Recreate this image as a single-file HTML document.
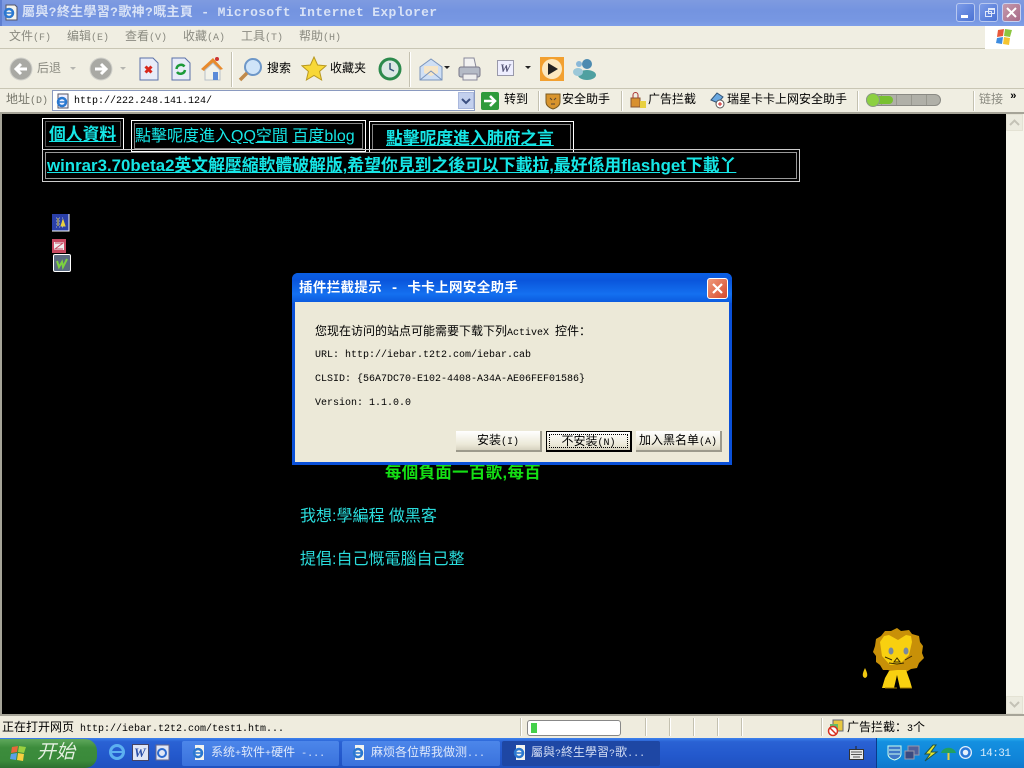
<!DOCTYPE html>
<html><head><meta charset="utf-8">
<style>
html,body{margin:0;padding:0;background:#000}
#r{position:relative;width:1024px;height:768px;overflow:hidden;background:#000;font-family:"Liberation Mono","WenQuanYi Zen Hei","Noto Sans CJK SC",monospace;font-size:12px;color:#000}
#r div,#r svg{position:absolute}
.t{white-space:nowrap;line-height:14px}
.m{color:#8a8a80;top:30px;font-size:12px;white-space:nowrap;line-height:14px}
.m i{font-style:normal;font-size:10px}
s{font-size:10px;text-decoration:none}
.b{border:1px solid #fff;box-sizing:border-box}
.c{color:#16e6e6;white-space:nowrap;font-family:"Liberation Sans","WenQuanYi Zen Hei","Noto Sans CJK SC",sans-serif}
u{text-decoration:underline}
.sep{width:1px;background:#c4c1b0;border-right:1px solid #fff}
.btn{background:linear-gradient(#fff,#ece9d8 70%,#d6d2c0);border-right:2px solid #9c9a8c;border-bottom:2px solid #9c9a8c;box-sizing:border-box;text-align:center;line-height:20px;font-size:12px;white-space:nowrap}
.task{height:25px;top:741px;border-radius:2px;background:linear-gradient(#4c86ea,#3a72dc);color:#dfe8fa;line-height:24px;font-size:12px;white-space:nowrap;box-sizing:border-box;padding-left:29px}
</style></head><body><div id="r">

<!-- title bar -->
<div style="left:0;top:0;width:1024px;height:26px;background:linear-gradient(#7f9be0 0,#7494e0 40%,#7797e2 80%,#7f9fe8 100%)"></div>
<div style="left:0;top:0;width:2px;height:26px;background:#5f7fd0"></div>
<svg style="left:2px;top:4px" width="17" height="17" viewBox="0 0 17 17"><path d="M4 1h9l2 2v13H4z" fill="#f4f4ee" stroke="#556"/><circle cx="7" cy="9" r="4" fill="none" stroke="#2a78d0" stroke-width="2.500"/><path d="M3 9h8" stroke="#2a78d0" stroke-width="1.500"/></svg>
<div class="t" style="left:22px;top:5px;color:#d8e2f6;font-weight:bold;font-size:13px;line-height:15px;letter-spacing:.34px">屬與?終生學習?歌神?嘅主頁 - Microsoft Internet Explorer</div>
<div style="left:956px;top:3px;width:19px;height:19px;background:linear-gradient(135deg,#7d9ce8,#4a72d4);border:1px solid #b8c8f0;border-radius:3px;box-sizing:border-box"></div>
<div style="left:961px;top:15px;width:7px;height:3px;background:#fff"></div>
<div style="left:979px;top:3px;width:19px;height:19px;background:linear-gradient(135deg,#7d9ce8,#4a72d4);border:1px solid #b8c8f0;border-radius:3px;box-sizing:border-box"></div>
<div style="left:985px;top:11px;width:7px;height:6px;border:1px solid #dfe7fa;box-sizing:border-box"></div>
<div style="left:988px;top:8px;width:7px;height:6px;border:1px solid #dfe7fa;border-top-width:2px;box-sizing:border-box"></div>
<div style="left:1002px;top:3px;width:19px;height:19px;background:linear-gradient(135deg,#c49aac,#a86a88);border:1px solid #c8d0f0;border-radius:3px;box-sizing:border-box"></div>
<svg style="left:1002px;top:3px" width="19" height="19"><path d="M5 5l9 9M14 5l-9 9" stroke="#fff" stroke-width="2"/></svg>

<!-- menu -->
<div style="left:0;top:26px;width:1024px;height:23px;background:#f0eee2;border-bottom:1px solid #c9c6b4;box-sizing:border-box"></div>
<div class="m" style="left:9px">文件<i>(F)</i></div>
<div class="m" style="left:67px">编辑<i>(E)</i></div>
<div class="m" style="left:125px">查看<i>(V)</i></div>
<div class="m" style="left:183px">收藏<i>(A)</i></div>
<div class="m" style="left:241px">工具<i>(T)</i></div>
<div class="m" style="left:299px">帮助<i>(H)</i></div>
<div style="left:985px;top:26px;width:39px;height:23px;background:#fff"></div>
<svg style="left:995px;top:27px" width="20" height="20" viewBox="0 0 20 20"><path d="M3 3l6-1-1 7-6 1z" fill="#e8583a"/><path d="M10 2l7 1-2 7-6-1z" fill="#8cc63f"/><path d="M2 11l6-1-1 7-6-1z" fill="#3d8ce0"/><path d="M9 10l6 1-1 7-6-1z" fill="#f4c430"/></svg>

<!-- toolbar -->
<div style="left:0;top:49px;width:1024px;height:40px;background:#f0eee2;border-bottom:1px solid #c9c6b4;box-sizing:border-box"></div>
<svg style="left:9px;top:57px" width="24" height="24"><circle cx="12" cy="12" r="11" fill="#a9a9a4" stroke="#d0d0ca"/><path d="M18 12H8M12 7l-5 5 5 5" stroke="#fff" stroke-width="3" fill="none"/></svg>
<div class="t" style="left:37px;top:62px;color:#8a8a80">后退</div>
<svg style="left:70px;top:66px" width="7" height="5"><path d="M0 1h6L3 4z" fill="#b5b5b0"/></svg>
<svg style="left:89px;top:57px" width="24" height="24"><circle cx="12" cy="12" r="11" fill="#a9a9a4" stroke="#d0d0ca"/><path d="M6 12h10M12 7l5 5-5 5" stroke="#fff" stroke-width="3" fill="none"/></svg>
<svg style="left:120px;top:66px" width="7" height="5"><path d="M0 1h6L3 4z" fill="#b5b5b0"/></svg>
<svg style="left:139px;top:57px" width="20" height="24"><path d="M1 1h13l5 5v17H1z" fill="#e8ecf8" stroke="#5a70a8"/><path d="M6.500 9.500l6 6M12.500 9.500l-6 6" stroke="#d8281c" stroke-width="3"/></svg>
<svg style="left:171px;top:57px" width="20" height="24"><path d="M1 1h13l5 5v17H1z" fill="#e8ecf8" stroke="#5a70a8"/><path d="M5.500 12a4.500 4.500 0 0 1 8-2.500M14 13a4.500 4.500 0 0 1-8 2" stroke="#1c9a3a" stroke-width="2.500" fill="none"/></svg>
<svg style="left:200px;top:56px" width="24" height="25"><path d="M1 13L13 2l10 11-3 1-7-6-9 7z" fill="#e88a2c"/><path d="M5 14l8-7 7 7v10H5z" fill="#f2f2ea" stroke="#b8c0c8"/><rect x="13" y="16" width="5" height="8" fill="#5a8ad8"/><circle cx="17" cy="3" r="2" fill="#c33"/></svg>
<div class="sep" style="left:231px;top:52px;height:35px"></div>
<svg style="left:238px;top:57px" width="26" height="25"><circle cx="15" cy="10" r="8" fill="#cfe4f8" stroke="#6d97c8" stroke-width="2"/><path d="M9 16L2 23" stroke="#c08a4a" stroke-width="3.500"/></svg>
<div class="t" style="left:267px;top:62px">搜索</div>
<svg style="left:301px;top:56px" width="26" height="26"><path d="M13 1l3.600 8 8.400.8-6.400 5.600 2 8.600-7.600-4.600L5.400 24l2-8.600L1 9.800 9.400 9z" fill="#f8d838" stroke="#b89820"/></svg>
<div class="t" style="left:330px;top:62px">收藏夹</div>
<svg style="left:378px;top:57px" width="24" height="24"><circle cx="12" cy="12" r="10" fill="#dce8e4" stroke="#2c8a4c" stroke-width="3"/><path d="M12 6v6l4 2" stroke="#357" stroke-width="1.500" fill="none"/></svg>
<div class="sep" style="left:409px;top:52px;height:35px"></div>
<svg style="left:419px;top:57px" width="24" height="24"><path d="M1 10L12 2l11 8v13H1z" fill="#cfdff4" stroke="#7a94bc"/><path d="M5 9h14v7l-7 3-7-3z" fill="#f6e6c8"/><path d="M1 23l11-9 11 9" fill="none" stroke="#7a94bc"/></svg>
<svg style="left:444px;top:66px" width="6" height="4"><path d="M0 0h6L3 3z" fill="#222"/></svg>
<svg style="left:457px;top:57px" width="25" height="25"><path d="M7 1h10l2 9H7z" fill="#f2f2f2" stroke="#889"/><rect x="2" y="10" width="21" height="10" rx="2" fill="#b4bac6" stroke="#778"/><rect x="6" y="17" width="14" height="6" fill="#eee" stroke="#889"/></svg>
<svg style="left:497px;top:60px" width="18" height="17"><rect x=".5" y=".5" width="16" height="15" fill="#eef" stroke="#99a"/><text x="3" y="12" font-family="Liberation Serif" font-style="italic" font-weight="bold" font-size="12" fill="#557">W</text></svg>
<svg style="left:525px;top:66px" width="6" height="4"><path d="M0 0h6L3 3z" fill="#222"/></svg>
<div style="left:540px;top:57px;width:24px;height:24px;background:#f2a030"></div>
<svg style="left:540px;top:57px" width="24" height="24"><circle cx="12" cy="12" r="10" fill="#fbe8c0"/><path d="M8 6l10 6-10 6z" fill="#222"/></svg>
<svg style="left:572px;top:58px" width="26" height="22"><circle cx="7" cy="6" r="3" fill="#8ab8d8"/><circle cx="15" cy="6" r="5" fill="#4c8ab0"/><ellipse cx="15" cy="17" rx="9" ry="5" fill="#4fa0a0"/><ellipse cx="6" cy="14" rx="5" ry="4" fill="#9cc8d8"/></svg>

<!-- address bar -->
<div style="left:0;top:89px;width:1024px;height:24px;background:#f0eee2"></div>
<div class="t" style="left:6px;top:93px;color:#77776c">地址<s>(D)</s></div>
<div style="left:52px;top:90px;width:423px;height:21px;background:#fff;border:1px solid #8a9ac0;box-sizing:border-box"></div>
<svg style="left:55px;top:93px" width="16" height="16"><path d="M3 1h10v14H3z" fill="#eef" stroke="#556"/><circle cx="7" cy="9" r="4" fill="none" stroke="#2a78d0" stroke-width="2.500"/><path d="M3 9h8" stroke="#2a78d0" stroke-width="1.500"/></svg>
<div class="t" style="left:74px;top:95px;font-size:10px;line-height:13px">http://222.248.141.124/</div>
<div style="left:458px;top:92px;width:16px;height:17px;background:#c3d0ee;border:1px solid #aab8dd;box-sizing:border-box"></div>
<svg style="left:458px;top:92px" width="16" height="17"><path d="M4 7l4 4 4-4" stroke="#3b4f80" stroke-width="2" fill="none"/></svg>
<div style="left:481px;top:92px;width:18px;height:18px;background:#2e9a3a;border-radius:2px"></div>
<svg style="left:481px;top:92px" width="18" height="18"><path d="M3 9h11M9 4l5 5-5 5" stroke="#fff" stroke-width="2.500" fill="none"/></svg>
<div class="t" style="left:504px;top:93px">转到</div>
<div class="sep" style="left:538px;top:91px;height:20px"></div>
<svg style="left:545px;top:92px" width="16" height="18"><path d="M1 2h14v8c0 4-4 6-7 7-3-1-7-3-7-7z" fill="#d8942c" stroke="#7a5a20"/><path d="M5 6l2 2M11 6l-2 2M6 12h4" stroke="#543"/></svg>
<div class="t" style="left:562px;top:93px">安全助手</div>
<div class="sep" style="left:621px;top:91px;height:20px"></div>
<svg style="left:630px;top:92px" width="17" height="17"><rect x="1" y="6" width="9" height="9" fill="#d89030" stroke="#853"/><path d="M3 6V3a2.500 2.500 0 0 1 5 0v3" stroke="#a33" fill="none"/><rect x="10" y="9" width="6" height="7" fill="#e8d040"/></svg>
<div class="t" style="left:648px;top:93px">广告拦截</div>
<svg style="left:709px;top:92px" width="17" height="17"><path d="M2 8L8 1l6 4-5 6z" fill="#6aa8e0" stroke="#357"/><circle cx="11" cy="12" r="4" fill="#fff" stroke="#555"/><path d="M9 12h4M11 10v4" stroke="#c22"/></svg>
<div class="t" style="left:727px;top:93px">瑞星卡卡上网安全助手</div>
<div class="sep" style="left:857px;top:91px;height:20px"></div>
<div style="left:866px;top:94px;width:75px;height:12px;border-radius:6px;background:repeating-linear-gradient(90deg,#b0b0a8 0,#b0b0a8 14px,#98988f 14px,#98988f 15px);border:1px solid #8a8a84;box-sizing:border-box"></div>
<div style="left:868px;top:96px;width:25px;height:8px;background:#78c030;border-radius:4px"></div>
<div style="left:866px;top:93px;width:14px;height:14px;border-radius:7px;background:#8cd040;border:1px solid #8a9a84;box-sizing:border-box"></div>
<div class="sep" style="left:973px;top:91px;height:20px"></div>
<div class="t" style="left:979px;top:93px;color:#8a8a80">链接</div>
<div class="t" style="left:1010px;top:90px;font-size:11px;font-weight:bold">»</div>

<!-- frame / scrollbar -->
<div style="left:0;top:112px;width:1024px;height:2px;background:#a6a498"></div>
<div style="left:0;top:112px;width:2px;height:604px;background:#a6a498"></div>
<div style="left:1006px;top:114px;width:18px;height:602px;background:#f5f4ea"></div>
<div style="left:1006px;top:114px;width:17px;height:17px;background:#ecebdf;border:1px solid #e4e2d4;box-sizing:border-box"></div>
<svg style="left:1006px;top:114px" width="17" height="17"><path d="M4 11l4.500-4.500L13 11" stroke="#c4c2b6" stroke-width="2" fill="none"/></svg>
<div style="left:1006px;top:696px;width:17px;height:18px;background:#ecebdf;border:1px solid #e4e2d4;box-sizing:border-box"></div>
<svg style="left:1006px;top:696px" width="17" height="18"><path d="M4 6l4.500 4.500L13 6" stroke="#c4c2b6" stroke-width="2" fill="none"/></svg>

<!-- page content -->
<div class="b" style="left:42px;top:118px;width:82px;height:32px"></div>
<div class="b" style="left:45px;top:121px;width:76px;height:26px;border-color:#555"></div>
<div class="c t" style="left:49px;top:126px;font-size:16.800px;line-height:18px;font-weight:bold"><u>個人資料</u></div>
<div class="b" style="left:131px;top:120px;width:235px;height:32px"></div>
<div class="b" style="left:134px;top:123px;width:229px;height:26px;border-color:#888"></div>
<div class="c t" style="left:135px;top:128px;font-size:16px;line-height:18px">點擊呢度進入<u>QQ空間</u> <u>百度blog</u></div>
<div class="b" style="left:369px;top:121px;width:205px;height:32px"></div>
<div class="b" style="left:372px;top:124px;width:199px;height:26px;border-color:#888"></div>
<div class="c t" style="left:386px;top:130px;font-size:16.800px;line-height:18px;font-weight:bold"><u>點擊呢度進入肺府之言</u></div>
<div class="b" style="left:42px;top:149px;width:758px;height:33px;border-color:#ccc"></div>
<div class="b" style="left:45px;top:152px;width:752px;height:27px;border-color:#999"></div>
<div class="c t" style="left:47px;top:157px;font-size:16.800px;line-height:18px;font-weight:bold;letter-spacing:.04px"><u>winrar3.70beta2英文解壓縮軟體破解版,希望你見到之後可以下載拉,最好係用flashget下載丫</u></div>

<svg style="left:52px;top:214px" width="18" height="18"><rect width="17" height="17" fill="#2a3fa8"/><path d="M17 0v17H0" fill="none" stroke="#fff"/><path d="M4 4h9M4 7h9M4 10h9M4 13h9" stroke="#9aa8e0" stroke-dasharray="1 2"/><path d="M6 4v8M11 6l-2 6h4z" stroke="#e8d040" fill="#e8d040"/></svg>
<svg style="left:52px;top:239px" width="14" height="14"><rect width="14" height="14" fill="#c84a62"/><rect x="2" y="3" width="10" height="8" fill="#eee"/><path d="M3 4h8L3 10h8" stroke="#c84a62" fill="none"/></svg>
<div style="left:53px;top:254px;width:18px;height:18px;background:#5a6a80;border:1px solid #fff;border-radius:2px;box-sizing:border-box"></div>
<svg style="left:53px;top:254px" width="18" height="18"><path d="M4 7l2 6 3-5 1 5 4-8" stroke="#7cd040" stroke-width="2" fill="none"/></svg>

<div class="c t" style="left:385px;top:465px;font-size:16.400px;line-height:17px;font-weight:bold;color:#14e014;letter-spacing:.4px">每個負面一百歌,每百</div>
<div class="c t" style="left:300px;top:507px;font-size:16px;line-height:19px;color:#2adcdc">我想:學編程 做黑客</div>
<div class="c t" style="left:300px;top:550px;font-size:16px;line-height:19px;color:#2adcdc">提倡:自己慨電腦自己整</div>

<!-- lion -->
<svg style="left:860px;top:625px" width="70" height="68" viewBox="860 625 70 68">
<path d="M897 628l4 3 8-1 3 4 7 2 1 6 3 4-1 7 2 5-5 5-2 5-6 1-5 3-7-1-5 2-6-3-5 0-3-5-4-3 0-6-3-4 2-6 1-7 5-3 4-5 6 0z" fill="#c89008"/>
<path d="M884 636l5-1 9 5 8-5 5 1 1 6-3 13-9 9-10 1-8-9-2-14z" fill="#f8d010"/>
<ellipse cx="891" cy="651" rx="2.500" ry="3.500" fill="#7888a0"/><ellipse cx="906" cy="651" rx="2.500" ry="3.500" fill="#7888a0"/>
<path d="M897 658l-3 4h6zM885 657l7 3M912 656l-7 4M889 663l8 1 7-1" stroke="#3a2a00" fill="none"/>
<path d="M889 671l8-1 9 0 4 11 2 7h-12l-3-13-3 13h-12l3-10z" fill="#f8d010"/>
<path d="M885 688h12M900 688h12" stroke="#a07800"/>
<path d="M865 678c-3-1-3-4 0-10 3 6 3 9 0 10z" fill="#f0c810"/>
</svg>

<!-- dialog -->
<div style="left:292px;top:273px;width:440px;height:192px;background:#0a50d8;border-radius:6px 6px 0 0;box-sizing:border-box"></div>
<div style="left:292px;top:273px;width:440px;height:30px;border-radius:6px 6px 0 0;background:linear-gradient(#0a5fe4,#0a56dc 25%,#1470f0 70%,#0a58dc)"></div>
<div class="t" style="left:299px;top:283px;color:#fff;font-weight:bold;font-size:13.500px;letter-spacing:.35px">插件拦截提示 - 卡卡上网安全助手</div>
<div style="left:707px;top:278px;width:21px;height:21px;background:linear-gradient(135deg,#ee9a7c,#d8492c);border:1px solid #fff;border-radius:3px;box-sizing:border-box"></div>
<svg style="left:707px;top:278px" width="21" height="21"><path d="M6 6l9 9M15 6l-9 9" stroke="#fff" stroke-width="2.200"/></svg>
<div style="left:295px;top:302px;width:434px;height:160px;background:#ece9d8"></div>
<div class="t" style="left:315px;top:325px;font-size:12px">您现在访问的站点可能需要下载下列<s>ActiveX </s>控件：</div>
<div class="t" style="left:315px;top:349px;font-size:10px">URL: http://iebar.t2t2.com/iebar.cab</div>
<div class="t" style="left:315px;top:373px;font-size:10px">CLSID: {56A7DC70-E102-4408-A34A-AE06FEF01586}</div>
<div class="t" style="left:315px;top:397px;font-size:10px">Version: 1.1.0.0</div>
<div class="btn" style="left:456px;top:431px;width:86px;height:21px">安装<s>(I)</s></div>
<div class="btn" style="left:546px;top:431px;width:86px;height:21px;border:1px solid #000;border-right:2px solid #000;border-bottom:2px solid #000">不安装<s>(N)</s></div>
<div style="left:549px;top:434px;width:79px;height:14px;border:1px dotted #000;box-sizing:border-box"></div>
<div class="btn" style="left:636px;top:431px;width:86px;height:21px">加入黑名单<s>(A)</s></div>

<!-- status bar -->
<div style="left:0;top:714px;width:1024px;height:2px;background:#a6a498"></div>
<div style="left:0;top:716px;width:1024px;height:22px;background:#efecde"></div>
<div class="t" style="left:2px;top:721px;font-size:12px;line-height:14px">正在打开网页<s> http://iebar.t2t2.com/test1.htm...</s></div>
<div class="sep" style="left:520px;top:718px;height:18px"></div>
<div style="left:527px;top:720px;width:94px;height:16px;background:#fff;border:1px solid #888;border-radius:3px;box-sizing:border-box"></div>
<div style="left:531px;top:723px;width:6px;height:10px;background:#44d04a"></div>
<div class="sep" style="left:645px;top:718px;height:18px"></div>
<div class="sep" style="left:669px;top:718px;height:18px"></div>
<div class="sep" style="left:693px;top:718px;height:18px"></div>
<div class="sep" style="left:717px;top:718px;height:18px"></div>
<div class="sep" style="left:741px;top:718px;height:18px"></div>
<div class="sep" style="left:821px;top:718px;height:18px"></div>
<svg style="left:827px;top:719px" width="18" height="18"><rect x="6" y="1" width="10" height="11" fill="#e8c840" stroke="#667"/><rect x="3" y="5" width="8" height="8" fill="#68b868"/><circle cx="6" cy="12" r="4.500" fill="#fff" stroke="#d83020" stroke-width="1.500"/><path d="M3 9l6 6" stroke="#d83020" stroke-width="1.500"/></svg>
<div class="t" style="left:847px;top:721px">广告拦截：<s>3</s>个</div>

<!-- taskbar -->
<div style="left:0;top:738px;width:1024px;height:30px;background:linear-gradient(#3d82ee 0,#2a62d4 12%,#2358cc 60%,#2052c0 100%)"></div>
<div style="left:0;top:739px;width:97px;height:29px;background:linear-gradient(#5fa85c,#3c8c3c 30%,#3a8a3a 75%,#2c7030);border-radius:0 12px 12px 0"></div>
<svg style="left:10px;top:744px" width="19" height="18"><path d="M2 3l6-1-1 6-6 1z" fill="#e8683a"/><path d="M9 2l7 1-2 6-6-1z" fill="#9ad040"/><path d="M1 10l6-1-1 7-6-1z" fill="#5aa0e8"/><path d="M8 9l6 1-1 7-6-1z" fill="#f8d040"/></svg>
<div class="t" style="left:37px;top:742px;color:#e4f0e0;font-size:19px;line-height:22px;font-style:italic">开始</div>
<svg style="left:108px;top:743px" width="18" height="18"><circle cx="9" cy="9" r="6.500" fill="none" stroke="#5cb0f0" stroke-width="3"/><path d="M3 9h12" stroke="#5cb0f0" stroke-width="2"/></svg>
<svg style="left:132px;top:744px" width="17" height="17"><rect x=".5" y=".5" width="16" height="16" fill="#dfe6f6" stroke="#446"/><text x="2" y="13" font-family="Liberation Serif" font-style="italic" font-weight="bold" font-size="13" fill="#2a4fa8">W</text></svg>
<svg style="left:154px;top:744px" width="17" height="17"><rect x="2" y="1" width="13" height="15" fill="#dfe6f6" stroke="#668"/><circle cx="8" cy="9" r="4" fill="none" stroke="#2a6ad0" stroke-width="2"/></svg>
<div class="task" style="left:182px;width:157px">系统<s>+</s>软件<s>+</s>硬件<s> -...</s></div>
<svg style="left:191px;top:744px" width="16" height="17"><path d="M4 1h9v15H4z" fill="#f4f4ee"/><circle cx="7" cy="9" r="4" fill="none" stroke="#2a78d0" stroke-width="2.500"/><path d="M3 9h8" stroke="#2a78d0" stroke-width="1.500"/></svg>
<div class="task" style="left:342px;width:158px">麻烦各位帮我做测<s>...</s></div>
<svg style="left:351px;top:744px" width="16" height="17"><path d="M4 1h9v15H4z" fill="#f4f4ee"/><circle cx="7" cy="9" r="4" fill="none" stroke="#2a78d0" stroke-width="2.500"/><path d="M3 9h8" stroke="#2a78d0" stroke-width="1.500"/></svg>
<div class="task" style="left:502px;width:158px;background:#1e47a4;color:#d4def4">屬與<s>?</s>終生學習<s>?</s>歌<s>...</s></div>
<svg style="left:512px;top:744px" width="16" height="17"><path d="M4 1h9v15H4z" fill="#f4f4ee"/><circle cx="7" cy="9" r="4" fill="none" stroke="#2a78d0" stroke-width="2.500"/><path d="M3 9h8" stroke="#2a78d0" stroke-width="1.500"/></svg>
<svg style="left:849px;top:746px" width="15" height="14"><rect x=".5" y="3.500" width="14" height="10" fill="#e8e8e8" stroke="#333"/><path d="M2 6h11M2 8.500h11M4 11h7" stroke="#555"/><path d="M7 3V0" stroke="#222"/></svg>
<div style="left:876px;top:738px;width:148px;height:30px;background:linear-gradient(#2cb0f0 0,#1490e0 12%,#1084d8 70%,#0f78cc 100%);border-left:1px solid #0a3a8a;box-sizing:border-box"></div>
<svg style="left:887px;top:745px" width="15" height="16"><path d="M1 1h13v8c0 3-3 5-6.500 6C4 14 1 12 1 9z" fill="#3e78c8" stroke="#cfe"/><path d="M2 5h11M2 9h11" stroke="#cfe"/></svg>
<svg style="left:904px;top:745px" width="17" height="16"><rect x="4" y="1" width="11" height="9" fill="#50609a" stroke="#99a"/><rect x="1" y="6" width="9" height="8" fill="#3a4a80" stroke="#99a"/></svg>
<svg style="left:922px;top:744px" width="17" height="18"><path d="M11 1L3 10h5l-5 7 12-9H9l5-7z" fill="#e8e830" stroke="#254"/></svg>
<svg style="left:940px;top:745px" width="17" height="16"><path d="M1 8c2-7 13-7 15 0z" fill="#22a060"/><path d="M8.500 8v7" stroke="#e8d040" stroke-width="2"/></svg>
<svg style="left:958px;top:745px" width="15" height="15"><circle cx="7.500" cy="7.500" r="6.500" fill="#e4f0fc"/><circle cx="7.500" cy="7.500" r="4" fill="none" stroke="#2a78d8" stroke-width="2.500"/></svg>
<div class="t" style="left:980px;top:747px;color:#d8ecfa;font-size:11px;letter-spacing:-.5px">14:31</div>

</div></body></html>
